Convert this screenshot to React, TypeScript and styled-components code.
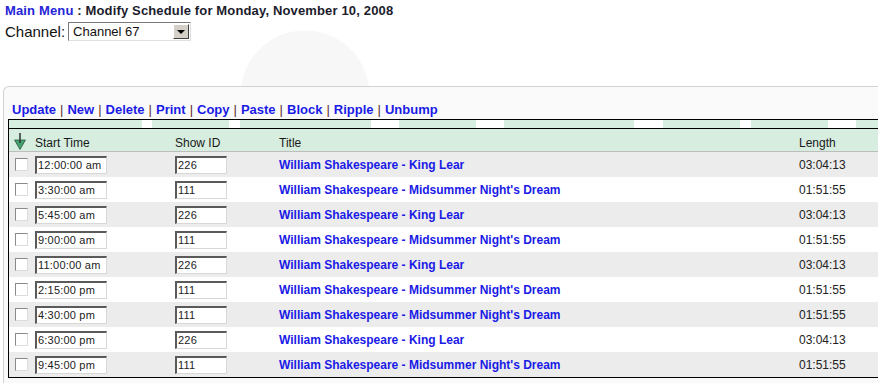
import * as React from "react"
import styled, { createGlobalStyle } from "styled-components"

const GlobalStyle = createGlobalStyle`
  html, body {
    margin: 0;
    padding: 0;
    overflow: hidden;
    background: #ffffff radial-gradient(circle at 305px 95px, #f7f7f7 0, #f7f7f7 64px, transparent 65px) no-repeat;
    font-family: "Liberation Sans", Arial, sans-serif;
    color: #222;
  }
`

const Page = styled.div`
  width: 878px;
  height: 383px;
`

const Heading = styled.div`
  padding: 2px 0 0 5px;
  font-size: 13px;
  font-weight: bold;
  letter-spacing: 0.15px;
  color: #1c1c2c;
  line-height: 17px;
`

const MenuLink = styled.a`
  color: #2424d8;
  text-decoration: none;
`

const ChannelRow = styled.div`
  display: flex;
  align-items: center;
  gap: 3px;
  padding-left: 5px;
  margin-top: 3px;
  height: 19px;
`

const ChannelLabel = styled.span`
  font-size: 15px;
  color: #111;
`

const SelectBox = styled.div`
  display: flex;
  align-items: stretch;
  width: 123px;
  height: 19px;
  box-sizing: border-box;
  border: 1px solid;
  border-color: #7a7a7a #e0e0e0 #e0e0e0 #7a7a7a;
  background: #fff;
`

const SelectValue = styled.span`
  flex: 1;
  font-size: 13px;
  line-height: 17px;
  padding-left: 4px;
  color: #111;
`

const SelectButton = styled.span`
  width: 16px;
  margin: 1px;
  box-sizing: border-box;
  background: #d4d0c8;
  border: 1px solid;
  border-color: #fff #404040 #404040 #fff;
  display: flex;
  align-items: center;
  justify-content: center;

  &::after {
    content: "";
    border-left: 4px solid transparent;
    border-right: 4px solid transparent;
    border-top: 4px solid #000;
  }
`

const Panel = styled.div`
  margin: 45px 0 0 3px;
  border-top: 1px solid #d2d2d2;
  border-left: 1px solid #d2d2d2;
  border-top-left-radius: 6px;
  background: #fafafa;
  height: 300px;
`

const Toolbar = styled.div`
  padding: 14px 0 0 8px;
  height: 18px;
  font-size: 13px;
  font-weight: bold;
  line-height: 17px;
`

const ToolLink = styled.a`
  color: #1a1ae6;
  text-decoration: none;
`

const Sep = styled.span`
  color: #5a2a2a;
  font-weight: normal;
  padding: 0 4px;
`

const Table = styled.div`
  margin-left: 4px;
  width: 900px;
  border: 1px solid #000;
  border-right: none;
  background: #fff;
`

const Strip = styled.div`
  height: 8px;
  border-bottom: 1px solid #000;
  background: linear-gradient(
    to right,
    #d8eee1 0 133px,
    #fff 133px 143px,
    #d8eee1 143px 220px,
    #fff 220px 231px,
    #d8eee1 231px 362px,
    #fff 362px 390px,
    #d8eee1 390px 467px,
    #fff 467px 495px,
    #d8eee1 495px 625px,
    #fff 625px 654px,
    #d8eee1 654px 731px,
    #fff 731px 742px,
    #d8eee1 742px 819px,
    #fff 819px 847px,
    #d8eee1 847px
  );
`

const Row = styled.div<{ $shade?: "head" | "gray" | "white" }>`
  display: grid;
  grid-template-columns: 26px 140px 104px 520px 1fr;
  align-items: center;
  height: ${(p) => (p.$shade === "head" ? "22px" : "25px")};
  background: ${(p) =>
    p.$shade === "head" ? "#d6ede0" : p.$shade === "gray" ? "#ececec" : "#ffffff"};
  border-bottom: ${(p) => (p.$shade === "head" ? "1px solid #bdbdbd" : "none")};
  font-size: 12px;
`

const HeadCell = styled.span`
  color: #1a1a1a;
  padding-top: 5px;
`

const SortIcon = styled.svg`
  margin: 2px 0 0 5px;
  display: block;
`

const Check = styled.span`
  display: block;
  width: 13px;
  height: 13px;
  margin-left: 6px;
  box-sizing: border-box;
  border: 1px solid;
  border-color: #8a8a8a #dcdcdc #dcdcdc #8a8a8a;
  background: #fff;
`

const Field = styled.span<{ $w: number }>`
  display: block;
  width: ${(p) => p.$w}px;
  height: 18px;
  box-sizing: border-box;
  border-style: solid;
  border-color: #5a5a5a #d8d8d8 #d8d8d8 #5a5a5a;
  border-width: 2px 1px 1px 2px;
  background: #fff;
  font-size: 11px;
  letter-spacing: 0.2px;
  line-height: 15px;
  padding-left: 1px;
  color: #222;
`

const ShowLink = styled.a`
  color: #1a1ae6;
  font-weight: bold;
  text-decoration: none;
`

const LengthCell = styled.span`
  color: #222;
`

const actions = ["Update", "New", "Delete", "Print", "Copy", "Paste", "Block", "Ripple", "Unbump"]

const lear = { id: "226", title: "William Shakespeare - King Lear", length: "03:04:13" }
const dream = {
  id: "111",
  title: "William Shakespeare - Midsummer Night's Dream",
  length: "01:51:55",
}

const schedule = [
  { time: "12:00:00 am", ...lear },
  { time: "3:30:00 am", ...dream },
  { time: "5:45:00 am", ...lear },
  { time: "9:00:00 am", ...dream },
  { time: "11:00:00 am", ...lear },
  { time: "2:15:00 pm", ...dream },
  { time: "4:30:00 pm", ...dream },
  { time: "6:30:00 pm", ...lear },
  { time: "9:45:00 pm", ...dream },
]

const App = () => (
  <Page>
    <GlobalStyle />
    <Heading>
      <MenuLink href="#">Main Menu</MenuLink> : Modify Schedule for Monday, November 10, 2008
    </Heading>
    <ChannelRow>
      <ChannelLabel>Channel:</ChannelLabel>
      <SelectBox>
        <SelectValue>Channel 67</SelectValue>
        <SelectButton />
      </SelectBox>
    </ChannelRow>
    <Panel>
      <Toolbar>
        {actions.map((a, i) => (
          <React.Fragment key={a}>
            {i > 0 && <Sep>|</Sep>}
            <ToolLink href="#">{a}</ToolLink>
          </React.Fragment>
        ))}
      </Toolbar>
      <Table>
        <Strip />
        <Row $shade="head">
          <SortIcon width="12" height="17" viewBox="0 0 12 17">
            <path d="M0.5 7 L11.5 7 L6 16.5 Z" fill="#44a070" stroke="#2c5a40" strokeWidth="0.8" />
            <rect x="5.2" y="0" width="1.6" height="10" fill="#33403a" />
          </SortIcon>
          <HeadCell>Start Time</HeadCell>
          <HeadCell>Show ID</HeadCell>
          <HeadCell>Title</HeadCell>
          <HeadCell>Length</HeadCell>
        </Row>
        {schedule.map((s, i) => (
          <Row key={s.time} $shade={i % 2 === 0 ? "gray" : "white"}>
            <Check />
            <Field $w={72}>{s.time}</Field>
            <Field $w={52}>{s.id}</Field>
            <ShowLink href="#">{s.title}</ShowLink>
            <LengthCell>{s.length}</LengthCell>
          </Row>
        ))}
      </Table>
    </Panel>
  </Page>
)

export default App
